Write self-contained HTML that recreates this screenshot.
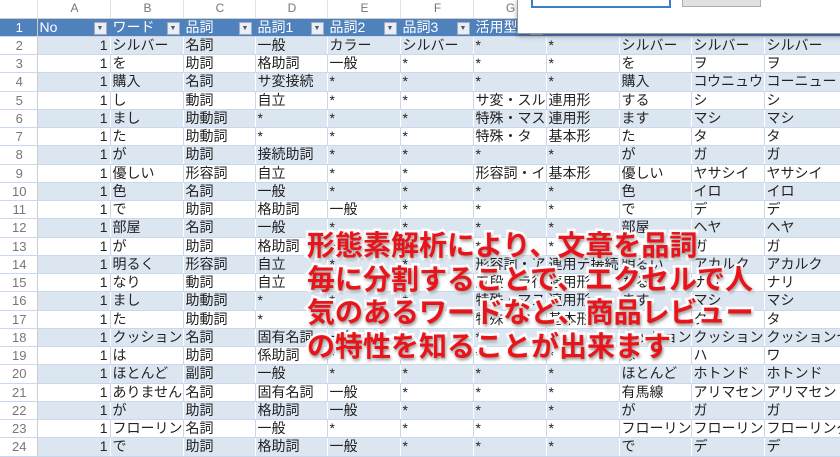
<!DOCTYPE html>
<html><head><meta charset="utf-8">
<style>
body{margin:0;width:840px;height:446px;overflow:hidden;background:#fff;position:relative;font-family:"Liberation Sans","Noto Sans CJK JP",sans-serif;}
table{position:absolute;left:0;top:0;border-collapse:collapse;table-layout:fixed;width:840px;}
td{height:18.25px;padding:0 0 0 2px;font-size:14px;line-height:17px;color:#222;white-space:nowrap;overflow:hidden;border-right:1px solid #c9d8ec;border-bottom:1px solid #c9d8ec;box-sizing:border-box;}
tr.h td{height:18px;font-size:12px;color:#777;text-align:center;background:#fff;border-right:1px solid #e2e2e2;border-bottom:1px solid #ccc;}
tr.r:nth-child(odd) td{background:#dce6f1;border-right-color:#fff;}
tr.r:nth-child(even) td{background:#fff;}
tr.t td{background:#4f81bd !important;color:#fff;position:relative;border-right:1px solid #4f81bd;}
tr.t td span{position:absolute;right:3px;top:3px;width:11px;height:11px;background:#e8eef7;border:1px solid #aab;font-size:7px;color:#555;line-height:11px;text-align:center;}
td.n{text-align:center;color:#777;font-size:13px;background:#fff !important;border-right:1px solid #ccc !important;}
td.a{text-align:right;padding-right:2px;}
.d{position:absolute;left:517px;top:-1px;width:330px;height:33px;background:#fff;border:1px solid #9a9a9a;box-shadow:0 2px 5px rgba(0,0,0,.35);}
.d .i{position:absolute;left:13px;top:-2px;width:136px;height:6px;border:2px solid #3c7fc7;}
.d .b{position:absolute;left:164px;top:-2px;width:77px;height:7px;background:#e1e1e1;border:1px solid #adadad;}
.o{position:absolute;left:307px;top:228px;font-size:28px;line-height:33.5px;font-weight:bold;color:#e8141a;-webkit-text-stroke:5px #fff;paint-order:stroke fill;text-shadow:1px 2px 3px rgba(0,0,0,.45);font-family:"Noto Sans CJK JP",sans-serif;white-space:nowrap;}
</style></head><body>
<table>
<colgroup><col style="width:37px"><col style="width:73px"><col style="width:73px"><col style="width:72px"><col style="width:72px"><col style="width:73px"><col style="width:73px"><col style="width:73px"><col style="width:73px"><col style="width:72px"><col style="width:73px"><col style="width:76px"></colgroup>
<tr class="h"><td></td><td>A</td><td>B</td><td>C</td><td>D</td><td>E</td><td>F</td><td>G</td><td>H</td><td>I</td><td>J</td><td>K</td></tr>
<tr class="t"><td class="n">1</td><td>No<span>▼</span></td><td>ワード<span>▼</span></td><td>品詞<span>▼</span></td><td>品詞1<span>▼</span></td><td>品詞2<span>▼</span></td><td>品詞3<span>▼</span></td><td>活用型<span>▼</span></td><td>活用形</td><td>原形</td><td>読み</td><td>発音</td></tr>
<tr class="r"><td class="n">2</td><td class="a">1</td><td>シルバー</td><td>名詞</td><td>一般</td><td>カラー</td><td>シルバー</td><td>*</td><td>*</td><td>シルバー</td><td>シルバー</td><td>シルバー</td></tr>
<tr class="r"><td class="n">3</td><td class="a">1</td><td>を</td><td>助詞</td><td>格助詞</td><td>一般</td><td>*</td><td>*</td><td>*</td><td>を</td><td>ヲ</td><td>ヲ</td></tr>
<tr class="r"><td class="n">4</td><td class="a">1</td><td>購入</td><td>名詞</td><td>サ変接続</td><td>*</td><td>*</td><td>*</td><td>*</td><td>購入</td><td>コウニュウ</td><td>コーニュー</td></tr>
<tr class="r"><td class="n">5</td><td class="a">1</td><td>し</td><td>動詞</td><td>自立</td><td>*</td><td>*</td><td>サ変・スル</td><td>連用形</td><td>する</td><td>シ</td><td>シ</td></tr>
<tr class="r"><td class="n">6</td><td class="a">1</td><td>まし</td><td>助動詞</td><td>*</td><td>*</td><td>*</td><td>特殊・マス</td><td>連用形</td><td>ます</td><td>マシ</td><td>マシ</td></tr>
<tr class="r"><td class="n">7</td><td class="a">1</td><td>た</td><td>助動詞</td><td>*</td><td>*</td><td>*</td><td>特殊・タ</td><td>基本形</td><td>た</td><td>タ</td><td>タ</td></tr>
<tr class="r"><td class="n">8</td><td class="a">1</td><td>が</td><td>助詞</td><td>接続助詞</td><td>*</td><td>*</td><td>*</td><td>*</td><td>が</td><td>ガ</td><td>ガ</td></tr>
<tr class="r"><td class="n">9</td><td class="a">1</td><td>優しい</td><td>形容詞</td><td>自立</td><td>*</td><td>*</td><td>形容詞・イ段</td><td>基本形</td><td>優しい</td><td>ヤサシイ</td><td>ヤサシイ</td></tr>
<tr class="r"><td class="n">10</td><td class="a">1</td><td>色</td><td>名詞</td><td>一般</td><td>*</td><td>*</td><td>*</td><td>*</td><td>色</td><td>イロ</td><td>イロ</td></tr>
<tr class="r"><td class="n">11</td><td class="a">1</td><td>で</td><td>助詞</td><td>格助詞</td><td>一般</td><td>*</td><td>*</td><td>*</td><td>で</td><td>デ</td><td>デ</td></tr>
<tr class="r"><td class="n">12</td><td class="a">1</td><td>部屋</td><td>名詞</td><td>一般</td><td>*</td><td>*</td><td>*</td><td>*</td><td>部屋</td><td>ヘヤ</td><td>ヘヤ</td></tr>
<tr class="r"><td class="n">13</td><td class="a">1</td><td>が</td><td>助詞</td><td>格助詞</td><td>一般</td><td>*</td><td>*</td><td>*</td><td>が</td><td>ガ</td><td>ガ</td></tr>
<tr class="r"><td class="n">14</td><td class="a">1</td><td>明るく</td><td>形容詞</td><td>自立</td><td>*</td><td>*</td><td>形容詞・アウオ段</td><td>連用テ接続</td><td>明るい</td><td>アカルク</td><td>アカルク</td></tr>
<tr class="r"><td class="n">15</td><td class="a">1</td><td>なり</td><td>動詞</td><td>自立</td><td>*</td><td>*</td><td>五段・ラ行</td><td>連用形</td><td>なる</td><td>ナリ</td><td>ナリ</td></tr>
<tr class="r"><td class="n">16</td><td class="a">1</td><td>まし</td><td>助動詞</td><td>*</td><td>*</td><td>*</td><td>特殊・マス</td><td>連用形</td><td>ます</td><td>マシ</td><td>マシ</td></tr>
<tr class="r"><td class="n">17</td><td class="a">1</td><td>た</td><td>助動詞</td><td>*</td><td>*</td><td>*</td><td>特殊・タ</td><td>基本形</td><td>た</td><td>タ</td><td>タ</td></tr>
<tr class="r"><td class="n">18</td><td class="a">1</td><td>クッション性</td><td>名詞</td><td>固有名詞</td><td>一般</td><td>*</td><td>*</td><td>*</td><td>クッション性</td><td>クッションセイ</td><td>クッションセイ</td></tr>
<tr class="r"><td class="n">19</td><td class="a">1</td><td>は</td><td>助詞</td><td>係助詞</td><td>*</td><td>*</td><td>*</td><td>*</td><td>は</td><td>ハ</td><td>ワ</td></tr>
<tr class="r"><td class="n">20</td><td class="a">1</td><td>ほとんど</td><td>副詞</td><td>一般</td><td>*</td><td>*</td><td>*</td><td>*</td><td>ほとんど</td><td>ホトンド</td><td>ホトンド</td></tr>
<tr class="r"><td class="n">21</td><td class="a">1</td><td>ありません</td><td>名詞</td><td>固有名詞</td><td>一般</td><td>*</td><td>*</td><td>*</td><td>有馬線</td><td>アリマセン</td><td>アリマセン</td></tr>
<tr class="r"><td class="n">22</td><td class="a">1</td><td>が</td><td>助詞</td><td>格助詞</td><td>一般</td><td>*</td><td>*</td><td>*</td><td>が</td><td>ガ</td><td>ガ</td></tr>
<tr class="r"><td class="n">23</td><td class="a">1</td><td>フローリング</td><td>名詞</td><td>一般</td><td>*</td><td>*</td><td>*</td><td>*</td><td>フローリング</td><td>フローリング</td><td>フローリング</td></tr>
<tr class="r"><td class="n">24</td><td class="a">1</td><td>で</td><td>助詞</td><td>格助詞</td><td>一般</td><td>*</td><td>*</td><td>*</td><td>で</td><td>デ</td><td>デ</td></tr>
</table>
<div class="d"><div class="i"></div><div class="b"></div></div>
<div class="o">形態素解析により、文章を品詞<br>毎に分割することで、エクセルで人<br>気のあるワードなど、商品レビュー<br>の特性を知ることが出来ます</div>
</body></html>
